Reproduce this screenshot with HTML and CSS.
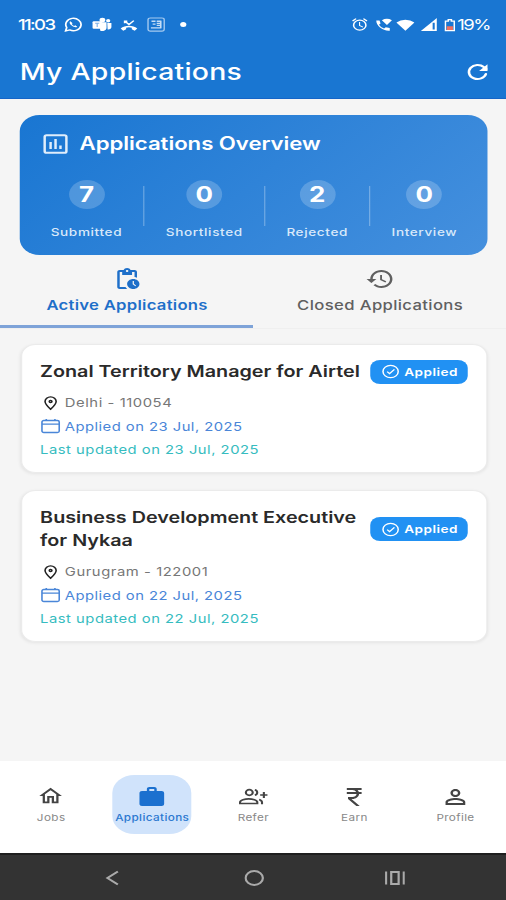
FILE: index.html
```html
<!DOCTYPE html>
<html lang="en">
<head>
<meta charset="utf-8">
<title>My Applications</title>
<link rel="stylesheet" href="styles.css">
</head>
<body>
<div class="screen">
  <header class="header">
    <div class="status">
      <div class="status-left">
        <span class="clock">11:03</span>
        <svg class="s-wa" viewBox="0 0 16 16"><path d="M1.2 14.8l1-3.6A6.6 6.6 0 1 1 4.8 13.8z" fill="none" stroke="#fff" stroke-width="1.5"/><path d="M5.3 4.4c-1.2 1-.5 3 1.200 4.700s3.700 2.500 4.800 1.200l-1.700-1.400-1 .7C7.800 9.200 7 8.400 6.500 7.500l.8-.9z" fill="#fff"/></svg>
        <svg class="s-teams" viewBox="0 0 17 16"><circle cx="9" cy="3.300" r="2.500" fill="#fff"/><circle cx="14" cy="4" r="1.800" fill="#fff"/><path d="M7 5.500h5.600v6.500a3.500 3.500 0 0 1-5.600 2.300zM13.200 6.500h3.600v4.200c0 1.800-1.500 3-3.300 2.600z" fill="#fff"/><rect x="0.500" y="4.500" width="8" height="8" rx="1" fill="#fff"/><path d="M2.700 6.700h3.600M4.500 6.700v4" stroke="#7fb2e8" stroke-width="1"/></svg>
        <svg class="s-missed" viewBox="0 0 16 16"><path d="M4 3.500l4 4L12.500 3M4 6V3.500h2.500" fill="none" stroke="#fff" stroke-width="1.500"/><path d="M.3 12c4-4.200 11.400-4.200 15.400 0l-2.400 2.600-2.700-1.700v-1.900a8 8 0 0 0-5.200 0v1.900l-2.700 1.700z" fill="#fff"/></svg>
        <svg class="s-news" viewBox="0 0 16 16"><rect x="1" y="1" width="14" height="14" rx="2" fill="none" stroke="#a5caf0" stroke-width="1.200"/><path d="M4 4.500h3.500M5 7.500h2.500M3.500 11.500h9M8.500 4.500h4M8.500 6.800h4M8.500 9h4M12 4v8" stroke="#c5ddf6" stroke-width="1.400"/></svg>
        <i class="dot"></i>
      </div>
      <div class="status-right">
        <svg class="s-alarm" viewBox="0 0 24 24"><path fill="#fff" d="M22 5.720l-4.600-3.860-1.290 1.530 4.600 3.860L22 5.720zM7.880 3.390L6.600 1.860 2 5.710l1.290 1.530 4.590-3.850zM12.500 8H11v6l4.750 2.850.75-1.230-4-2.370V8zM12 4a9 9 0 1 0 0 18 9 9 0 0 0 0-18zm0 16a7 7 0 1 1 0-14 7 7 0 0 1 0 14z"/></svg>
        <svg class="s-call" viewBox="0 0 16 16"><path fill="#fff" d="M1 3.500h3l1 3.300-1.500 1.500a9 9 0 0 0 4.700 4.300l1.600-1.500 3.700.9V15C7 15.500 1 10 1 3.500zM6.200 3a8 8 0 0 1 9.300 0l-4.600 5.500z"/></svg>
        <svg class="s-wifi" viewBox="0 0 16 14"><path fill="#fff" d="M.2 4.200a12 12 0 0 1 15.600 0L8 13z"/></svg>
        <svg class="s-signal" viewBox="0 0 14 14"><path fill="#fff" d="M0 14L14 0v14z"/><path d="M11.200 5v7.500" stroke="#1976d2" stroke-width="1.800"/></svg>
        <svg class="s-batt" viewBox="0 0 10 14"><path d="M1 2.700h2.600V1h2.800v1.700H9v10.500H1z" fill="none" stroke="#fff" stroke-width="1.400"/><path d="M2.200 8.500h5.600v4H2.200z" fill="#f0705f"/></svg>
        <span class="pct">19%</span>
      </div>
    </div>
    <div class="appbar">
      <h1>My Applications</h1>
      <svg class="ic24" viewBox="0 0 24 24"><path d="M18.700 14A7 7 0 1 1 17 7.100L19 9" fill="none" stroke="#fff" stroke-width="2.100" stroke-linecap="round"/><path d="M20 4.200V11h-6.800z" fill="#fff"/></svg>
    </div>
  </header>

  <section class="overview">
    <div class="ov-head">
      <svg class="ic24" viewBox="0 0 24 24"><rect x="3.200" y="3.200" width="17.600" height="17.600" rx="1.600" fill="none" stroke="#e0edfb" stroke-width="2"/><path d="M8 10v7M12 7v10M16 13.500V17" stroke="#e0edfb" stroke-width="2"/></svg>
      <h2>Applications Overview</h2>
    </div>
    <div class="stats">
      <div class="stat"><b>7</b><span>Submitted</span></div>
      <i></i>
      <div class="stat"><b>0</b><span>Shortlisted</span></div>
      <i></i>
      <div class="stat"><b>2</b><span>Rejected</span></div>
      <i></i>
      <div class="stat"><b>0</b><span>Interview</span></div>
    </div>
  </section>

  <nav class="tabs">
    <div class="tab active">
      <svg class="ic24" viewBox="0 0 24 24"><path fill="currentColor" d="M17 12c-2.760 0-5 2.240-5 5s2.240 5 5 5 5-2.240 5-5-2.240-5-5-5zm1.650 7.350L16.500 17.200V14h1v2.790l1.850 1.850-.7.710zM18 3h-3.180C14.400 1.840 13.300 1 12 1s-2.400.84-2.820 2H6c-1.100 0-2 .9-2 2v15c0 1.100.9 2 2 2h6.110c-.59-.57-1.070-1.250-1.420-2H6V5h2v3h8V5h2v5.080c.71.1 1.380.31 2 .6V5c0-1.100-.9-2-2-2zm-6 2c-.55 0-1-.45-1-1s.45-1 1-1 1 .45 1 1-.45 1-1 1z"/></svg>
      <span>Active Applications</span>
    </div>
    <div class="tab">
      <svg class="ic24" viewBox="0 0 24 24"><path fill="currentColor" d="M13 3c-4.970 0-9 4.030-9 9H1l3.890 3.890.07.14L9 12H6c0-3.870 3.130-7 7-7s7 3.130 7 7-3.130 7-7 7c-1.930 0-3.680-.79-4.940-2.060l-1.420 1.420C8.270 19.990 10.510 21 13 21c4.970 0 9-4.030 9-9s-4.030-9-9-9zm-1 5v5l4.280 2.540.72-1.210-3.500-2.080V8H12z"/></svg>
      <span>Closed Applications</span>
    </div>
  </nav>

  <main class="jobs">
    <article class="job">
      <div class="job-head">
        <h3>Zonal Territory Manager for Airtel</h3>
        <div class="badge"><svg viewBox="0 0 16 16"><circle cx="8" cy="8" r="6.600"/><path d="M5 8.200l2.100 2.100L11.300 5.800"/></svg><span>Applied</span></div>
      </div>
      <div class="row loc"><svg viewBox="0 0 16 16"><path d="M8 14.200C5 10.800 3.500 8.500 3.500 6.400a4.500 4.500 0 0 1 9 0c0 2.100-1.500 4.400-4.500 7.800z"/><circle cx="8" cy="6.400" r="1.100"/></svg><span>Delhi - 110054</span></div>
      <div class="row date"><svg viewBox="0 0 16 16"><rect x="1" y="2.500" width="14" height="12" rx="1.500"/><path d="M1 6.200h14M4.500 1v2M11.500 1v2"/></svg><span>Applied on 23 Jul, 2025</span></div>
      <div class="row upd"><span>Last updated on 23 Jul, 2025</span></div>
    </article>
    <article class="job">
      <div class="job-head">
        <h3>Business Development Executive<br>for Nykaa</h3>
        <div class="badge"><svg viewBox="0 0 16 16"><circle cx="8" cy="8" r="6.600"/><path d="M5 8.200l2.100 2.100L11.300 5.800"/></svg><span>Applied</span></div>
      </div>
      <div class="row loc"><svg viewBox="0 0 16 16"><path d="M8 14.200C5 10.800 3.500 8.500 3.500 6.400a4.500 4.500 0 0 1 9 0c0 2.100-1.500 4.400-4.500 7.800z"/><circle cx="8" cy="6.400" r="1.100"/></svg><span>Gurugram - 122001</span></div>
      <div class="row date"><svg viewBox="0 0 16 16"><rect x="1" y="2.500" width="14" height="12" rx="1.500"/><path d="M1 6.200h14M4.500 1v2M11.500 1v2"/></svg><span>Applied on 22 Jul, 2025</span></div>
      <div class="row upd"><span>Last updated on 22 Jul, 2025</span></div>
    </article>
  </main>

  <nav class="bottom">
    <div class="item"><div class="pill"><svg viewBox="0 0 24 24" class="ic22"><path fill="currentColor" d="M12 5.690l5 4.500V18h-2v-6H9v6H7v-7.810l5-4.500M12 3L2 12h3v8h6v-6h2v6h6v-8h3L12 3z"/></svg><span>Jobs</span></div></div>
    <div class="item on"><div class="pill"><svg viewBox="0 0 24 24" class="ic24"><path fill="currentColor" d="M20 6h-4V4c0-1.110-.89-2-2-2h-4c-1.110 0-2 .89-2 2v2H4c-1.110 0-1.990.89-1.990 2L2 19c0 1.110.89 2 2 2h16c1.110 0 2-.89 2-2V8c0-1.110-.89-2-2-2zm-6 0h-4V4h4v2z"/></svg><span>Applications</span></div></div>
    <div class="item"><div class="pill"><svg viewBox="0 0 24 24" class="ic24"><g fill="none" stroke="currentColor" stroke-width="1.700"><circle cx="9" cy="7.500" r="2.800"/><path d="M1.500 18.500v-1.300c0-2 4-3.300 7-3.300s7 1.300 7 3.300v1.300zM13.500 4.700a3 3 0 0 1 0 5.600M17 14.500c1.500.7 2.300 1.600 2.300 2.700v2.100M20.800 7v6M17.800 10h6"/></g></svg><span>Refer</span></div></div>
    <div class="item"><div class="pill"><svg viewBox="0 0 24 24" class="ic24"><path fill="currentColor" d="M13.660 7C13.100 5.820 11.900 5 10.500 5H6V3h12v2h-3.260c.48.58.84 1.260 1.050 2H18v2h-2.020c-.25 2.800-2.610 5-5.480 5h-.73l6.730 7h-2.770L7 14v-2h3.500c1.760 0 3.220-1.300 3.460-3H6V7h7.660z"/></svg><span>Earn</span></div></div>
    <div class="item"><div class="pill"><svg viewBox="0 0 24 24" class="ic24"><path fill="currentColor" d="M12 5.900a2.100 2.100 0 1 1 0 4.200 2.100 2.100 0 0 1 0-4.200m0 9c2.970 0 6.100 1.460 6.100 2.100v1.100H5.900V17c0-.64 3.130-2.100 6.100-2.100M12 4C9.790 4 8 5.790 8 8s1.790 4 4 4 4-1.790 4-4-1.790-4-4-4zm0 9c-2.670 0-8 1.340-8 4v3h16v-3c0-2.660-5.330-4-8-4z"/></svg><span>Profile</span></div></div>
  </nav>

  <footer class="android">
    <svg viewBox="0 0 16 16"><path d="M12.500 1.500L4 8l8.500 6.500"/></svg>
    <svg viewBox="0 0 16 16"><circle cx="8" cy="8" r="7"/></svg>
    <svg viewBox="0 0 16 16"><path d="M.8 1.500v13M15.200 1.500v13M5 2h6v12H5z"/></svg>
  </footer>
</div>
</body>
</html>
```
FILE: styles.css
```css
* { box-sizing: border-box; margin: 0; padding: 0; }
html, body { width: 506px; height: 900px; overflow: hidden; }
body { font-family: Inter, "Liberation Sans", sans-serif; background: #f5f5f5; }
svg { display: block; flex: none; }

/* 410px phone layout widened to fill the 506px viewport */
.screen {
  width: 410px;
  height: 900px;
  display: flex;
  flex-direction: column;
  transform: scaleX(1.23415);
  transform-origin: 0 0;
  background: #f5f5f5;
}
.ic24 { width: 24px; height: 24px; }
.ic22 { width: 22px; height: 22px; }

.header { height: 99px; flex: none; background: #1976d2; color: #fff; border-bottom: 1px solid #1565c8; }
.status { height: 49px; display: flex; justify-content: space-between; align-items: center; padding: 0 13px 0 14.5px; }
.status-left, .status-right { display: flex; align-items: center; }
.clock { font-size: 15px; font-weight: 500; letter-spacing: -1.3px; width: 37.5px; }
.s-wa { width: 15px; height: 15px; }
.s-teams { width: 17px; height: 15px; margin-left: 7px; }
.s-missed { width: 15px; height: 14px; margin-left: 6px; }
.s-news { width: 15px; height: 15px; margin-left: 7px; }
.dot { width: 5px; height: 5px; border-radius: 50%; background: #fff; margin-left: 12px; }
.s-alarm { width: 15px; height: 15px; }
.s-call { width: 14px; height: 15px; margin-left: 5px; }
.s-wifi { width: 15px; height: 14px; margin-left: 3px; }
.s-signal { width: 13px; height: 13px; margin-left: 5px; }
.s-batt { width: 9px; height: 14px; margin: 0 1px 0 6px; }
.pct { font-size: 15px; font-weight: 400; letter-spacing: -1.2px; }
.appbar { height: 46px; display: flex; align-items: center; justify-content: space-between; padding: 0 11px 0 16px; }
.appbar h1 { font-size: 23px; font-weight: 500; line-height: 28px; letter-spacing: 0.2px; }

.overview {
  height: 140px;
  margin: 16px 15px 0 16px;
  padding: 17px 16px 0 16.5px;
  border-radius: 16px;
  background: linear-gradient(135deg, #1976d2, #4590de);
  color: #fff;
  flex: none;
}
.ov-head { display: flex; align-items: center; gap: 8px; height: 24px; }
.ov-head h2 { font-size: 18px; font-weight: 600; line-height: 24px; letter-spacing: -0.05px; }
.stats { display: flex; justify-content: space-around; align-items: flex-start; margin-top: 25px; }
.stats i { width: 1px; height: 40px; margin-top: 5px; background: rgba(255,255,255,.3); }
.stat { display: flex; flex-direction: column; align-items: center; }
.stat b { width: 29px; height: 29px; border-radius: 50%; background: rgba(255,255,255,.2); font-size: 21px; font-weight: 700; line-height: 29px; text-align: center; margin-top: -1px; }
.stat span { font-size: 11px; font-weight: 500; line-height: 16px; letter-spacing: 0.5px; margin-top: 14.5px; color: #d9e9fa; }

.tabs { display: flex; height: 74px; flex: none; border-bottom: 1px solid #efefef; }
.tab { flex: 1; display: flex; flex-direction: column; align-items: center; padding: 12px 0 0 1px; color: #606060; font-size: 13.5px; font-weight: 500; letter-spacing: 0.3px; }
.tab span { line-height: 18px; margin-top: 5px; }
.tab.active { color: #1e6fc9; font-weight: 600; letter-spacing: 0.22px; border-bottom: 3px solid #7ea3d8; }

.jobs { flex: 1; padding: 15px 15px 0 16.5px; }
.job { background: #fff; border-radius: 12px; border: 1px solid #ebebeb; box-shadow: 0 1px 3px rgba(0,0,0,.07); padding: 14.75px 15px 10.5px 15px; margin-bottom: 17px; }
.job-head { display: flex; align-items: center; justify-content: space-between; min-height: 24px; }
.job h3 { font-size: 16px; font-weight: 600; line-height: 23.5px; color: #2a2a2a; white-space: nowrap; }
.badge { width: 79.5px; height: 24px; border-radius: 8px; background: #2191f3; color: #fff; display: flex; align-items: center; gap: 4px; padding-left: 9px; font-size: 11px; font-weight: 600; letter-spacing: 0.4px; flex: none; }
.badge svg { width: 15px; height: 15px; fill: none; stroke: #fff; stroke-width: 1.3; }
.row { display: flex; align-items: center; height: 23.5px; gap: 4px; font-size: 12px; letter-spacing: 0.37px; }
.row svg { width: 16px; height: 16px; fill: none; stroke-width: 1.3; }
.loc { margin-top: 7.25px; color: #777; letter-spacing: 0.45px; }
.loc svg { stroke: #222; }
.date { color: #4a86d8; }
.date svg { stroke: #4a86d8; }
.upd { color: #36bcc0; letter-spacing: 0.4px; }

.bottom { height: 92px; background: #fff; display: flex; flex: none; padding: 14px 0 0 0.5px; }
.item { flex: 1; display: flex; justify-content: center; }
.pill { width: 64px; height: 59px; border-radius: 18px; display: flex; flex-direction: column; align-items: center; color: #444; padding-top: 10px; }
.pill svg { margin-bottom: auto; }
.pill span { font-size: 9.5px; line-height: 14px; letter-spacing: 0.3px; margin-bottom: 9.5px; color: #888; }
.on .pill { background: #d0e3fb; color: #1b70cf; }
.on .pill span { color: #2b78d0; font-weight: 500; }

.android { height: 47px; flex: none; background: #333; border-top: 2px solid #1f1f1f; display: flex; align-items: center; justify-content: space-between; padding: 0 82px 0 83px; }
.android svg { width: 16px; height: 16px; fill: none; stroke: #aaa; stroke-width: 1.8; }
```
